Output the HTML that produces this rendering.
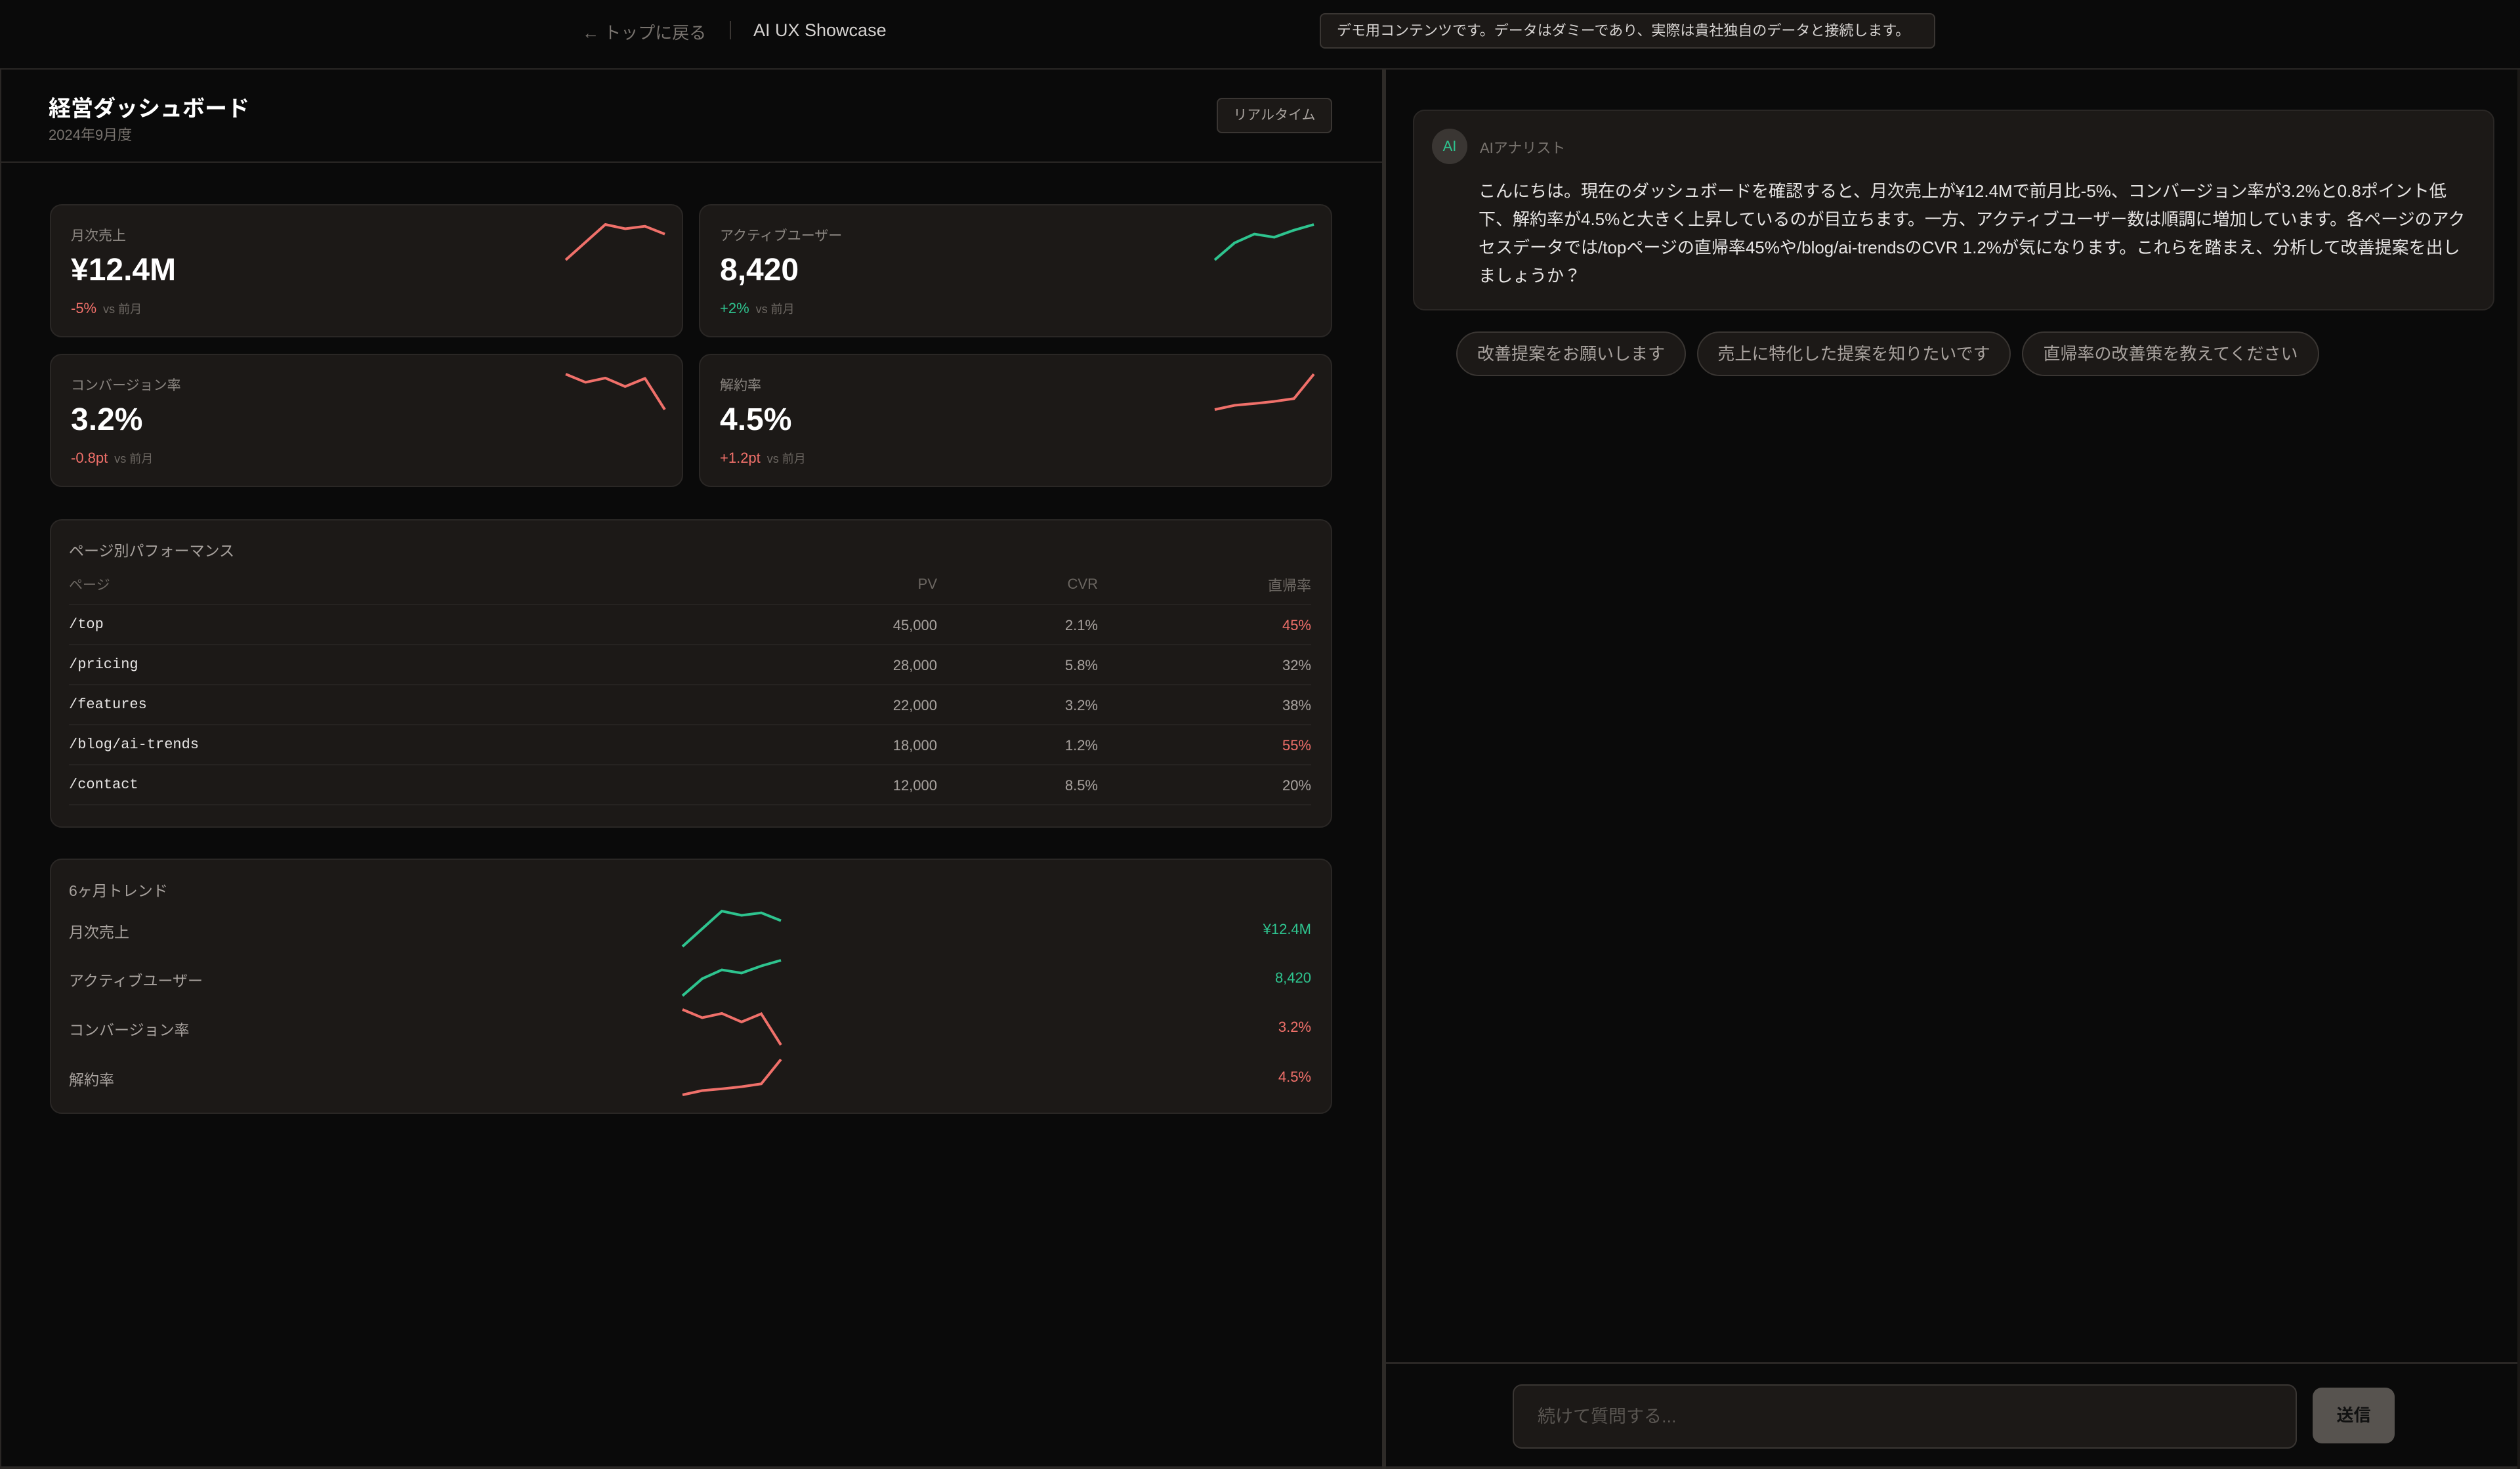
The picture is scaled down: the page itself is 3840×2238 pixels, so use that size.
<!DOCTYPE html>
<html><head><meta charset="utf-8"><style>
*{box-sizing:border-box;margin:0;padding:0}
body{width:3840px;height:2238px;background:#0a0a0a;color:#e7e5e4;font-family:"Liberation Sans","Noto Sans CJK JP",sans-serif;position:relative;overflow:hidden}
.a{position:absolute}
.card{position:absolute;background:#1c1917;border:2px solid #2a2725;border-radius:18px}
.lbl{position:absolute;font-size:21px;color:#8a8580}
.val{position:absolute;font-size:48px;font-weight:bold;color:#fff}
.chg{position:absolute;font-size:22px}
.chg span{font-size:18px;color:#6b6661;margin-left:10px}
.red{color:#f0706a}.grn{color:#2ec48f}
svg{position:absolute;overflow:visible}
.row{position:absolute;left:105px;width:1893px;height:61px;border-bottom:2px solid #262321;font-size:23px;color:#d6d3d1}
.row .p{position:absolute;left:0;top:17px;font-family:"Liberation Mono",monospace;font-size:22px;color:#e7e5e4}
.row .c1,.row .c2,.row .c3{position:absolute;top:18px;text-align:right;font-size:22px;color:#a8a29e}
.row .c3.red{color:#f0706a}
.c1{right:570px}.c2{right:325px}.c3{right:0}
.chip{position:absolute;top:505px;height:68px;border:2px solid #3a3633;border-radius:34px;background:#1c1917;color:#a8a29e;font-size:26px;line-height:64px;text-align:center}
.tl{position:absolute;left:105px;font-size:23px;color:#a8a29e}
.tv{position:absolute;right:0;font-size:22px;text-align:right}
</style></head><body>
<div class="a" style="left:0;top:104px;width:3840px;height:2px;background:#2a2725"></div>
<div class="a" style="left:887px;top:30px;font-size:26px;color:#78736e">← トップに戻る</div>
<div class="a" style="left:1112px;top:32px;width:2px;height:28px;background:#3a3633"></div>
<div class="a" style="left:1148px;top:31px;font-size:27px;color:#d6d3d1">AI UX Showcase</div>
<div class="a" style="left:2011px;top:20px;width:938px;height:54px;border:2px solid #3a3633;border-radius:8px;background:#1c1917;font-size:22px;color:#d6d3d1;line-height:50px;padding-left:24px">デモ用コンテンツです。データはダミーであり、実際は貴社独自のデータと接続します。</div>

<div class="a" style="left:0;top:106px;width:2px;height:2132px;background:#2a2725"></div>
<div class="a" style="left:0;top:2234px;width:3840px;height:4px;background:#2a2725"></div>
<div class="a" style="left:2106px;top:106px;width:6px;height:2132px;background:#2e2b28"></div>

<div class="a" style="left:74px;top:138px;font-size:34px;font-weight:bold;color:#fff">経営ダッシュボード</div>
<div class="a" style="left:74px;top:188px;font-size:22px;color:#78736e">2024年9月度</div>
<div class="a" style="left:1854px;top:149px;width:176px;height:54px;border:2px solid #3a3633;border-radius:8px;background:#1c1917;font-size:21px;color:#a8a29e;text-align:center;line-height:50px">リアルタイム</div>
<div class="a" style="left:2px;top:246px;width:2104px;height:2px;background:#2a2725"></div>

<div class="card" style="left:76px;top:311px;width:965px;height:203px">
 <div class="lbl" style="left:30px;top:30px">月次売上</div>
 <div class="val" style="left:30px;top:71px">¥12.4M</div>
 <div class="chg red" style="left:30px;top:144px">-5%<span>vs 前月</span></div>
 <svg style="left:784px;top:29px" width="151" height="54" viewBox="0 0 100 100" preserveAspectRatio="none"><polyline fill="none" stroke="#f0706a" stroke-width="4" vector-effect="non-scaling-stroke" stroke-linejoin="round" points="0,100 20,50 40,0 60,12 80,5 100,27"/></svg>
</div>
<div class="card" style="left:1065px;top:311px;width:965px;height:203px">
 <div class="lbl" style="left:30px;top:30px">アクティブユーザー</div>
 <div class="val" style="left:30px;top:71px">8,420</div>
 <div class="chg grn" style="left:30px;top:144px">+2%<span>vs 前月</span></div>
 <svg style="left:784px;top:29px" width="151" height="54" viewBox="0 0 100 100" preserveAspectRatio="none"><polyline fill="none" stroke="#2ec48f" stroke-width="4" vector-effect="non-scaling-stroke" stroke-linejoin="round" points="0,100 20,52 40,27 60,36 80,16 100,0"/></svg>
</div>
<div class="card" style="left:76px;top:539px;width:965px;height:203px">
 <div class="lbl" style="left:30px;top:30px">コンバージョン率</div>
 <div class="val" style="left:30px;top:71px">3.2%</div>
 <div class="chg red" style="left:30px;top:144px">-0.8pt<span>vs 前月</span></div>
 <svg style="left:784px;top:29px" width="151" height="54" viewBox="0 0 100 100" preserveAspectRatio="none"><polyline fill="none" stroke="#f0706a" stroke-width="4" vector-effect="non-scaling-stroke" stroke-linejoin="round" points="0,0 20,23 40,11 60,35 80,12 100,100"/></svg>
</div>
<div class="card" style="left:1065px;top:539px;width:965px;height:203px">
 <div class="lbl" style="left:30px;top:30px">解約率</div>
 <div class="val" style="left:30px;top:71px">4.5%</div>
 <div class="chg red" style="left:30px;top:144px">+1.2pt<span>vs 前月</span></div>
 <svg style="left:784px;top:29px" width="151" height="54" viewBox="0 0 100 100" preserveAspectRatio="none"><polyline fill="none" stroke="#f0706a" stroke-width="4" vector-effect="non-scaling-stroke" stroke-linejoin="round" points="0,100 20,88 40,83 60,77 80,69 100,0"/></svg>
</div>

<div class="card" style="left:76px;top:791px;width:1954px;height:470px"></div>
<div class="a" style="left:105px;top:820px;font-size:23px;color:#a8a29e">ページ別パフォーマンス</div>
<div class="row" style="top:862px;height:60px;color:#6b6661"><div class="a" style="left:0;top:13px;font-size:21px;color:#6b6661">ページ</div><div class="c1" style="top:15px;color:#6b6661">PV</div><div class="c2" style="top:15px;color:#6b6661">CVR</div><div class="c3" style="top:13px;color:#6b6661">直帰率</div></div>
<div class="row" style="top:922px"><div class="p">/top</div><div class="c1">45,000</div><div class="c2">2.1%</div><div class="c3 red">45%</div></div>
<div class="row" style="top:983px"><div class="p">/pricing</div><div class="c1">28,000</div><div class="c2">5.8%</div><div class="c3">32%</div></div>
<div class="row" style="top:1044px"><div class="p">/features</div><div class="c1">22,000</div><div class="c2">3.2%</div><div class="c3">38%</div></div>
<div class="row" style="top:1105px"><div class="p">/blog/ai-trends</div><div class="c1">18,000</div><div class="c2">1.2%</div><div class="c3 red">55%</div></div>
<div class="row" style="top:1166px"><div class="p">/contact</div><div class="c1">12,000</div><div class="c2">8.5%</div><div class="c3">20%</div></div>

<div class="card" style="left:76px;top:1308px;width:1954px;height:389px"></div>
<div class="a" style="left:105px;top:1338px;font-size:23px;color:#a8a29e">6ヶ月トレンド</div>
<div class="a" style="left:0;top:0;width:1998px">
 <div class="tl" style="top:1401px">月次売上</div><div class="tv grn" style="top:1403px">¥12.4M</div>
 <div class="tl" style="top:1475px">アクティブユーザー</div><div class="tv grn" style="top:1477px">8,420</div>
 <div class="tl" style="top:1550px">コンバージョン率</div><div class="tv red" style="top:1552px">3.2%</div>
 <div class="tl" style="top:1626px">解約率</div><div class="tv red" style="top:1628px">4.5%</div>
</div>
<svg style="left:1040px;top:1388px" width="150" height="54" viewBox="0 0 100 100" preserveAspectRatio="none"><polyline fill="none" stroke="#2ec48f" stroke-width="4" vector-effect="non-scaling-stroke" points="0,100 20,50 40,0 60,12 80,5 100,27"/></svg>
<svg style="left:1040px;top:1463px" width="150" height="54" viewBox="0 0 100 100" preserveAspectRatio="none"><polyline fill="none" stroke="#2ec48f" stroke-width="4" vector-effect="non-scaling-stroke" points="0,100 20,52 40,27 60,36 80,16 100,0"/></svg>
<svg style="left:1040px;top:1538px" width="150" height="54" viewBox="0 0 100 100" preserveAspectRatio="none"><polyline fill="none" stroke="#f0706a" stroke-width="4" vector-effect="non-scaling-stroke" points="0,0 20,23 40,11 60,35 80,12 100,100"/></svg>
<svg style="left:1040px;top:1614px" width="150" height="54" viewBox="0 0 100 100" preserveAspectRatio="none"><polyline fill="none" stroke="#f0706a" stroke-width="4" vector-effect="non-scaling-stroke" points="0,100 20,88 40,83 60,77 80,69 100,0"/></svg>

<div class="card" style="left:2153px;top:167px;width:1648px;height:306px"></div>
<div class="a" style="left:2182px;top:196px;width:54px;height:54px;border-radius:50%;background:#3a3633;color:#2ec48f;font-size:22px;text-align:center;line-height:54px">AI</div>
<div class="a" style="left:2255px;top:208px;font-size:22px;color:#78736e">AIアナリスト</div>
<div class="a" style="left:2253px;top:270px;width:1520px;font-size:26px;line-height:43px;color:#e7e5e4">こんにちは。現在のダッシュボードを確認すると、月次売上が¥12.4Mで前月比-5%、コンバージョン率が3.2%と0.8ポイント低下、解約率が4.5%と大きく上昇しているのが目立ちます。一方、アクティブユーザー数は順調に増加しています。各ページのアクセスデータでは/topページの直帰率45%や/blog/ai-trendsのCVR 1.2%が気になります。これらを踏まえ、分析して改善提案を出しましょうか？</div>
<div class="chip" style="left:2219px;width:350px">改善提案をお願いします</div>
<div class="chip" style="left:2586px;width:478px">売上に特化した提案を知りたいです</div>
<div class="chip" style="left:3081px;width:453px">直帰率の改善策を教えてください</div>

<div class="a" style="left:2112px;top:2075px;width:1728px;height:3px;background:#2a2725"></div>
<div class="a" style="left:2305px;top:2109px;width:1195px;height:98px;border:2px solid #3a3633;border-radius:14px;background:#1c1917;font-size:27px;color:#5a5652;line-height:94px;padding-left:36px">続けて質問する...</div>
<div class="a" style="left:3524px;top:2114px;width:125px;height:85px;border-radius:14px;background:#57534f;font-size:26px;color:#111;text-align:center;line-height:85px;font-weight:bold">送信</div>
<div class="a" style="left:3836px;top:106px;width:4px;height:2132px;background:#1a1816"></div>
</body></html>
